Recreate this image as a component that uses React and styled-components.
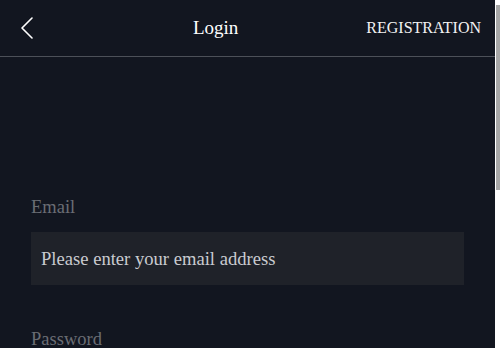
import React from 'react'
import styled, {createGlobalStyle} from 'styled-components'

const GlobalStyle = createGlobalStyle`
html, body {
  margin: 0;
  padding: 0;
  background: #121620;
  font-family: "Liberation Serif", "Times New Roman", serif;
  overflow: hidden;
}
`;

// window with its own (drawn) scrollbar, as in the screenshot
const Viewport = styled.div`
  height: 348px;
  display: flex;
  background: #121620;
`;

const Scroller = styled.div`
  flex: 1;
  overflow: hidden;
  color: #ffffff;
`;

const ScrollTrack = styled.div`
  width: 5px;
  background: #ffffff;
  display: flex;
  flex-direction: column;
  padding: 5px 0 4px;
  box-sizing: border-box;
`;

const ScrollThumb = styled.div`
  height: 185px;
  margin-left: 1px;
  background: #a6a6a6;
`;

const Header = styled.header`
  height: 56px;
  display: flex;
  align-items: center;
  border-bottom: 1px solid #4c5058;
  padding: 0 14px 0 16px;
`;

const BackButton = styled.button`
  width: 40px;
  height: 40px;
  display: flex;
  align-items: center;
  padding: 0 0 0 4px;
  background: none;
  border: none;
  cursor: pointer;
`;

const Title = styled.h1`
  flex: 1;
  margin: 0;
  text-align: center;
  font-size: 19px;
  font-weight: normal;
  color: #ffffff;
  padding-left: 9px;
`;

const HeaderLink = styled.a`
  font-size: 16px;
  color: #f2f2f2;
  text-decoration: none;
  cursor: pointer;
`;

const Form = styled.form`
  display: flex;
  flex-direction: column;
  padding: 140px 31px 40px;
`;

const Field = styled.div`
  display: flex;
  flex-direction: column;
  margin-bottom: ${props => props.last ? '28px' : '44px'};
`;

const Label = styled.label`
  font-size: 18.5px;
  color: #6a6d74;
  margin-bottom: 14px;
`;

const Input = styled.input`
  height: 53px;
  box-sizing: border-box;
  border: none;
  outline: none;
  background: #1f2229;
  padding: 0 10px;
  font-family: "Liberation Serif", "Times New Roman", serif;
  font-size: 18.6px;
  color: #ffffff;
  &::placeholder {
    color: #c9cbd0;
  }
`;

const Forgot = styled.a`
  align-self: flex-end;
  font-size: 15px;
  color: #6a6d74;
  margin-bottom: 40px;
`;

const Submit = styled.button`
  height: 50px;
  border: none;
  background: #3a6ff2;
  color: #ffffff;
  font-family: "Liberation Serif", "Times New Roman", serif;
  font-size: 18px;
  cursor: pointer;
`;

const ChevronLeft = () => (
  <svg width="14" height="22" viewBox="0 0 14 22" fill="none">
    <path d="M12 1 L2 11 L12 21" stroke="#ffffff" strokeWidth="1.6" strokeLinecap="round" strokeLinejoin="round"/>
  </svg>
);

export default function App() {
  return <Viewport>
    <GlobalStyle/>
    <Scroller>
      <Header>
        <BackButton aria-label="Back"><ChevronLeft/></BackButton>
        <Title>Login</Title>
        <HeaderLink>REGISTRATION</HeaderLink>
      </Header>
      <Form onSubmit={e => e.preventDefault()}>
        <Field>
          <Label>Email</Label>
          <Input type="email" placeholder="Please enter your email address"/>
        </Field>
        <Field last>
          <Label>Password</Label>
          <Input type="password" placeholder="Please enter your password"/>
        </Field>
        <Forgot>Forgot password?</Forgot>
        <Submit type="submit">Login</Submit>
      </Form>
    </Scroller>
    <ScrollTrack>
      <ScrollThumb/>
    </ScrollTrack>
  </Viewport>;
}
